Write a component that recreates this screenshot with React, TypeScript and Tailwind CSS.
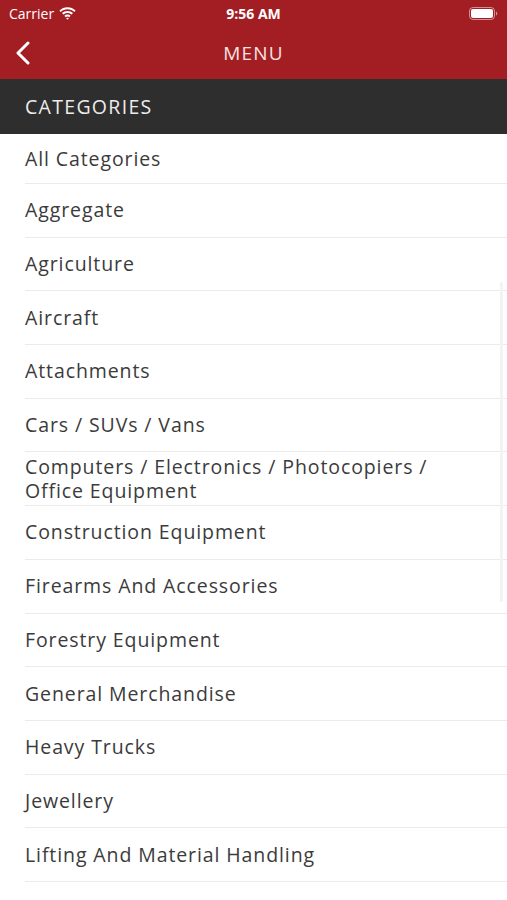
const categories = [
  'Aggregate',
  'Agriculture',
  'Aircraft',
  'Attachments',
  'Cars / SUVs / Vans',
  'Computers / Electronics / Photocopiers / Office Equipment',
  'Construction Equipment',
  'Firearms And Accessories',
  'Forestry Equipment',
  'General Merchandise',
  'Heavy Trucks',
  'Jewellery',
  'Lifting And Material Handling',
]

function StatusBar() {
  return (
    <div className="relative flex h-[27px] items-center justify-between px-[9px] text-white">
      <div className="flex items-center gap-[5px] text-[14px]">
        <span>Carrier</span>
        <svg width="17" height="13" viewBox="0 0 17 13" fill="white">
          <path d="M8.5 2.2c2.6 0 5 1 6.8 2.7l1.3-1.4C14.4 1.4 11.6 0.2 8.5 0.2S2.6 1.4 0.4 3.5l1.3 1.4C3.5 3.2 5.9 2.2 8.5 2.2z" />
          <path d="M8.5 5.9c1.6 0 3.1 0.6 4.2 1.6l1.3-1.4C12.6 4.7 10.6 3.9 8.5 3.9S4.4 4.7 3 6.1l1.3 1.4C5.4 6.5 6.9 5.9 8.5 5.9z" />
          <path d="M8.5 9.5c0.7 0 1.3 0.3 1.8 0.7l1.3-1.4C10.7 8 9.7 7.5 8.5 7.5S6.3 8 5.4 8.8l1.3 1.4C7.2 9.8 7.8 9.5 8.5 9.5z" />
          <path d="M8.5 12.8l1.4-1.5c-0.4-0.3-0.9-0.5-1.4-0.5s-1 0.2-1.4 0.5z" />
        </svg>
      </div>
      <span className="absolute left-1/2 -translate-x-1/2 text-[14px] font-bold">9:56 AM</span>
      <svg width="29" height="13" viewBox="0 0 29 13">
        <rect x="0.5" y="0.5" width="25" height="12" rx="3.5" fill="none" stroke="white" strokeOpacity="0.5" />
        <rect x="2" y="2" width="22" height="9" rx="2" fill="white" />
        <path d="M27 4.5v4c0.8-0.3 1.3-1.1 1.3-2s-0.5-1.7-1.3-2z" fill="white" fillOpacity="0.5" />
      </svg>
    </div>
  )
}

export default function App() {
  return (
    <div
      className="relative h-[900px] w-[507px] overflow-hidden bg-white"
      style={{ fontFamily: '"Open Sans", sans-serif' }}
    >
      <div className="bg-[#a21e23]">
        <StatusBar />
        <div className="relative flex h-[52px] items-center justify-center">
          <svg
            className="absolute left-[15px] top-[14px]"
            width="16"
            height="24"
            viewBox="0 0 16 24"
            fill="none"
            stroke="white"
            strokeWidth="3"
            strokeLinecap="round"
            strokeLinejoin="round"
          >
            <path d="M13 2L3 12l10 10" />
          </svg>
          <span className="text-[19px] tracking-[1.2px] text-[#f3e3e3]">MENU</span>
        </div>
      </div>

      <div className="flex h-[55px] items-center bg-[#2e2e2e] px-[25px]">
        <span className="text-[19.5px] tracking-[1.3px] text-[#ececec]">CATEGORIES</span>
      </div>

      <div className="pl-[25px] tracking-[0.9px]">
        <div className="flex h-[50px] items-center border-b border-[#ebebeb] text-[19.5px] text-[#3b3b3b]">
          All Categories
        </div>
        {categories.map((c) => (
          <div
            key={c}
            className="flex h-[53.7px] items-center border-b border-[#ebebeb] pr-[70px] text-[19.5px] leading-[24px] text-[#3b3b3b]"
          >
            {c}
          </div>
        ))}
      </div>

      <div className="absolute right-[4px] top-[282px] h-[320px] w-[3px] rounded-full bg-[#f3f3f3]" />
    </div>
  )
}
